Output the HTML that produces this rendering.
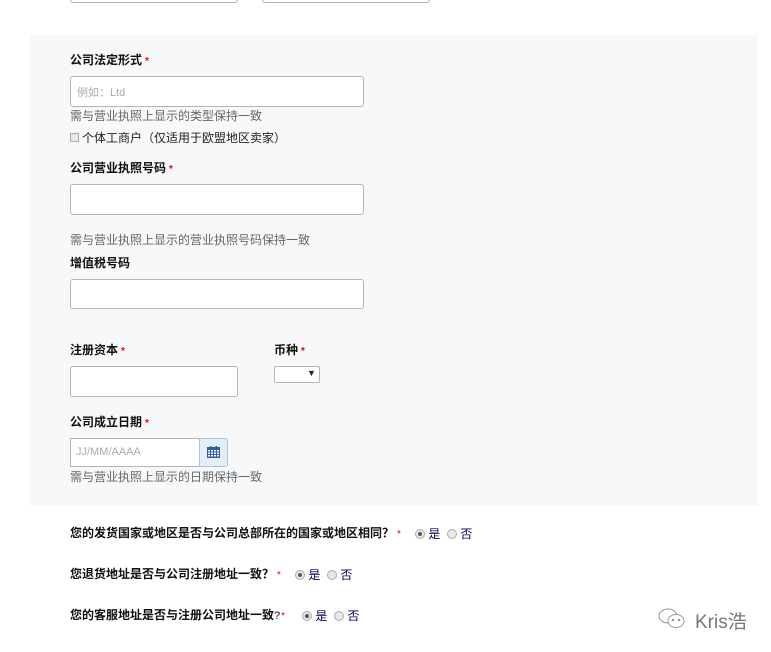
<!DOCTYPE html>
<html><head><meta charset="utf-8"><style>
body{margin:0;width:771px;height:652px;background:#fff;position:relative;overflow:hidden;font-family:"Liberation Sans","Noto Sans CJK SC",sans-serif;}
.a{position:absolute;}
.panel{left:30px;top:35px;width:728px;height:471px;background:#f7f8fa;}
.lab{font-size:12px;font-weight:bold;color:#111;}
.lab i{color:#e00;font-style:normal;font-size:10px;margin-left:3px;}
.inp{background:#fff;border:1px solid #b5b5b5;border-radius:3px;box-sizing:border-box;}
.hint{font-size:12px;color:#666;}
.ph{font-size:11px;color:#aaa;}
.q{font-size:12px;font-weight:bold;color:#111;}
.q i{color:#e00;font-style:normal;font-size:10px;margin-left:3px;font-weight:normal;}
.r{display:inline-block;width:8px;height:8px;border:1px solid #aaa;border-radius:50%;background:#e8e8e8;vertical-align:-1px;position:relative;}
.r.on::after{content:"";position:absolute;left:2px;top:2px;width:4px;height:4px;border-radius:50%;background:#555;}
.opt{font-size:12px;color:#000050;}
</style></head><body>
<div class="a inp" style="left:70px;top:-10px;width:168px;height:13px"></div>
<div class="a inp" style="left:262px;top:-10px;width:168px;height:13px"></div>
<div class="a panel"></div>
<div class="a lab" style="left:70px;top:51px">公司法定形式<i>*</i></div>
<div class="a inp" style="left:70px;top:76px;width:294px;height:31px"></div>
<div class="a ph" style="left:77px;top:84px">例如：Ltd</div>
<div class="a hint" style="left:70px;top:107px">需与营业执照上显示的类型保持一致</div>
<div class="a" style="left:70px;top:133px;width:7px;height:7px;border:1px solid #aaa;background:#e8e8e8"></div>
<div class="a" style="left:82px;top:129px;font-size:12px;color:#222">个体工商户（仅适用于欧盟地区卖家）</div>
<div class="a lab" style="left:70px;top:159px">公司营业执照号码<i>*</i></div>
<div class="a inp" style="left:70px;top:184px;width:294px;height:31px"></div>
<div class="a hint" style="left:70px;top:231px">需与营业执照上显示的营业执照号码保持一致</div>
<div class="a lab" style="left:70px;top:254px">增值税号码</div>
<div class="a inp" style="left:70px;top:279px;width:294px;height:30px"></div>
<div class="a lab" style="left:70px;top:341px">注册资本<i>*</i></div>
<div class="a inp" style="left:70px;top:366px;width:168px;height:31px"></div>
<div class="a lab" style="left:274px;top:341px">币种<i>*</i></div>
<div class="a inp" style="left:274px;top:366px;width:46px;height:17px;border-radius:2px"></div>
<div class="a" style="left:307px;top:368px;font-size:9px;color:#223">▼</div>
<div class="a lab" style="left:70px;top:413px">公司成立日期<i>*</i></div>
<div class="a" style="left:70px;top:438px;width:130px;height:29px;background:#fff;border:1px solid #b5b5b5;box-sizing:border-box"></div>
<div class="a" style="left:199px;top:438px;width:29px;height:29px;background:#e4eef7;border:1px solid #a9c4dc;box-sizing:border-box;border-radius:0 3px 3px 0"></div>
<svg class="a" style="left:207px;top:446px" width="13" height="12" viewBox="0 0 13 12"><rect x="0" y="1" width="13" height="11" fill="#2f5f9f"/><rect x="3" y="0" width="1.5" height="2" fill="#2f5f9f"/><rect x="8.5" y="0" width="1.5" height="2" fill="#2f5f9f"/><g fill="#fff"><rect x="1" y="4" width="2" height="1.5"/><rect x="4" y="4" width="2" height="1.5"/><rect x="7" y="4" width="2" height="1.5"/><rect x="10" y="4" width="2" height="1.5"/><rect x="1" y="6.5" width="2" height="1.5"/><rect x="4" y="6.5" width="2" height="1.5"/><rect x="7" y="6.5" width="2" height="1.5"/><rect x="10" y="6.5" width="2" height="1.5"/><rect x="1" y="9" width="2" height="1.5"/><rect x="4" y="9" width="2" height="1.5"/><rect x="7" y="9" width="2" height="1.5"/><rect x="10" y="9" width="2" height="1.5"/></g></svg>
<div class="a ph" style="left:76px;top:446px">JJ/MM/AAAA</div>
<div class="a hint" style="left:70px;top:468px">需与营业执照上显示的日期保持一致</div>
<div class="a q" style="left:70px;top:524px">您的发货国家或地区是否与公司总部所在的国家或地区相同？<i>*</i></div>
<div class="a opt" style="left:415px;top:525px"><span class="r on"></span> 是 &nbsp;<span class="r"></span> 否</div>
<div class="a q" style="left:70px;top:565px">您退货地址是否与公司注册地址一致？<i>*</i></div>
<div class="a opt" style="left:295px;top:566px"><span class="r on"></span> 是 &nbsp;<span class="r"></span> 否</div>
<div class="a q" style="left:70px;top:606px">您的客服地址是否与注册公司地址一致<span style="font-weight:normal;font-size:11px">?</span><i style="margin-left:1px">*</i></div>
<div class="a opt" style="left:302px;top:607px"><span class="r on"></span> 是 &nbsp;<span class="r"></span> 否</div>
<svg class="a" style="left:657px;top:607px" width="30" height="24" viewBox="0 0 30 24" fill="none" stroke="#999" stroke-width="1"><ellipse cx="11" cy="9" rx="9" ry="7"/><ellipse cx="19" cy="14" rx="8" ry="6.5" fill="#fff"/><circle cx="16" cy="13" r="0.8" fill="#999"/><circle cx="22" cy="13" r="0.8" fill="#999"/></svg>
<div class="a" style="left:695px;top:607px;font-size:19px;color:#777">Kris浩</div>
</body></html>
